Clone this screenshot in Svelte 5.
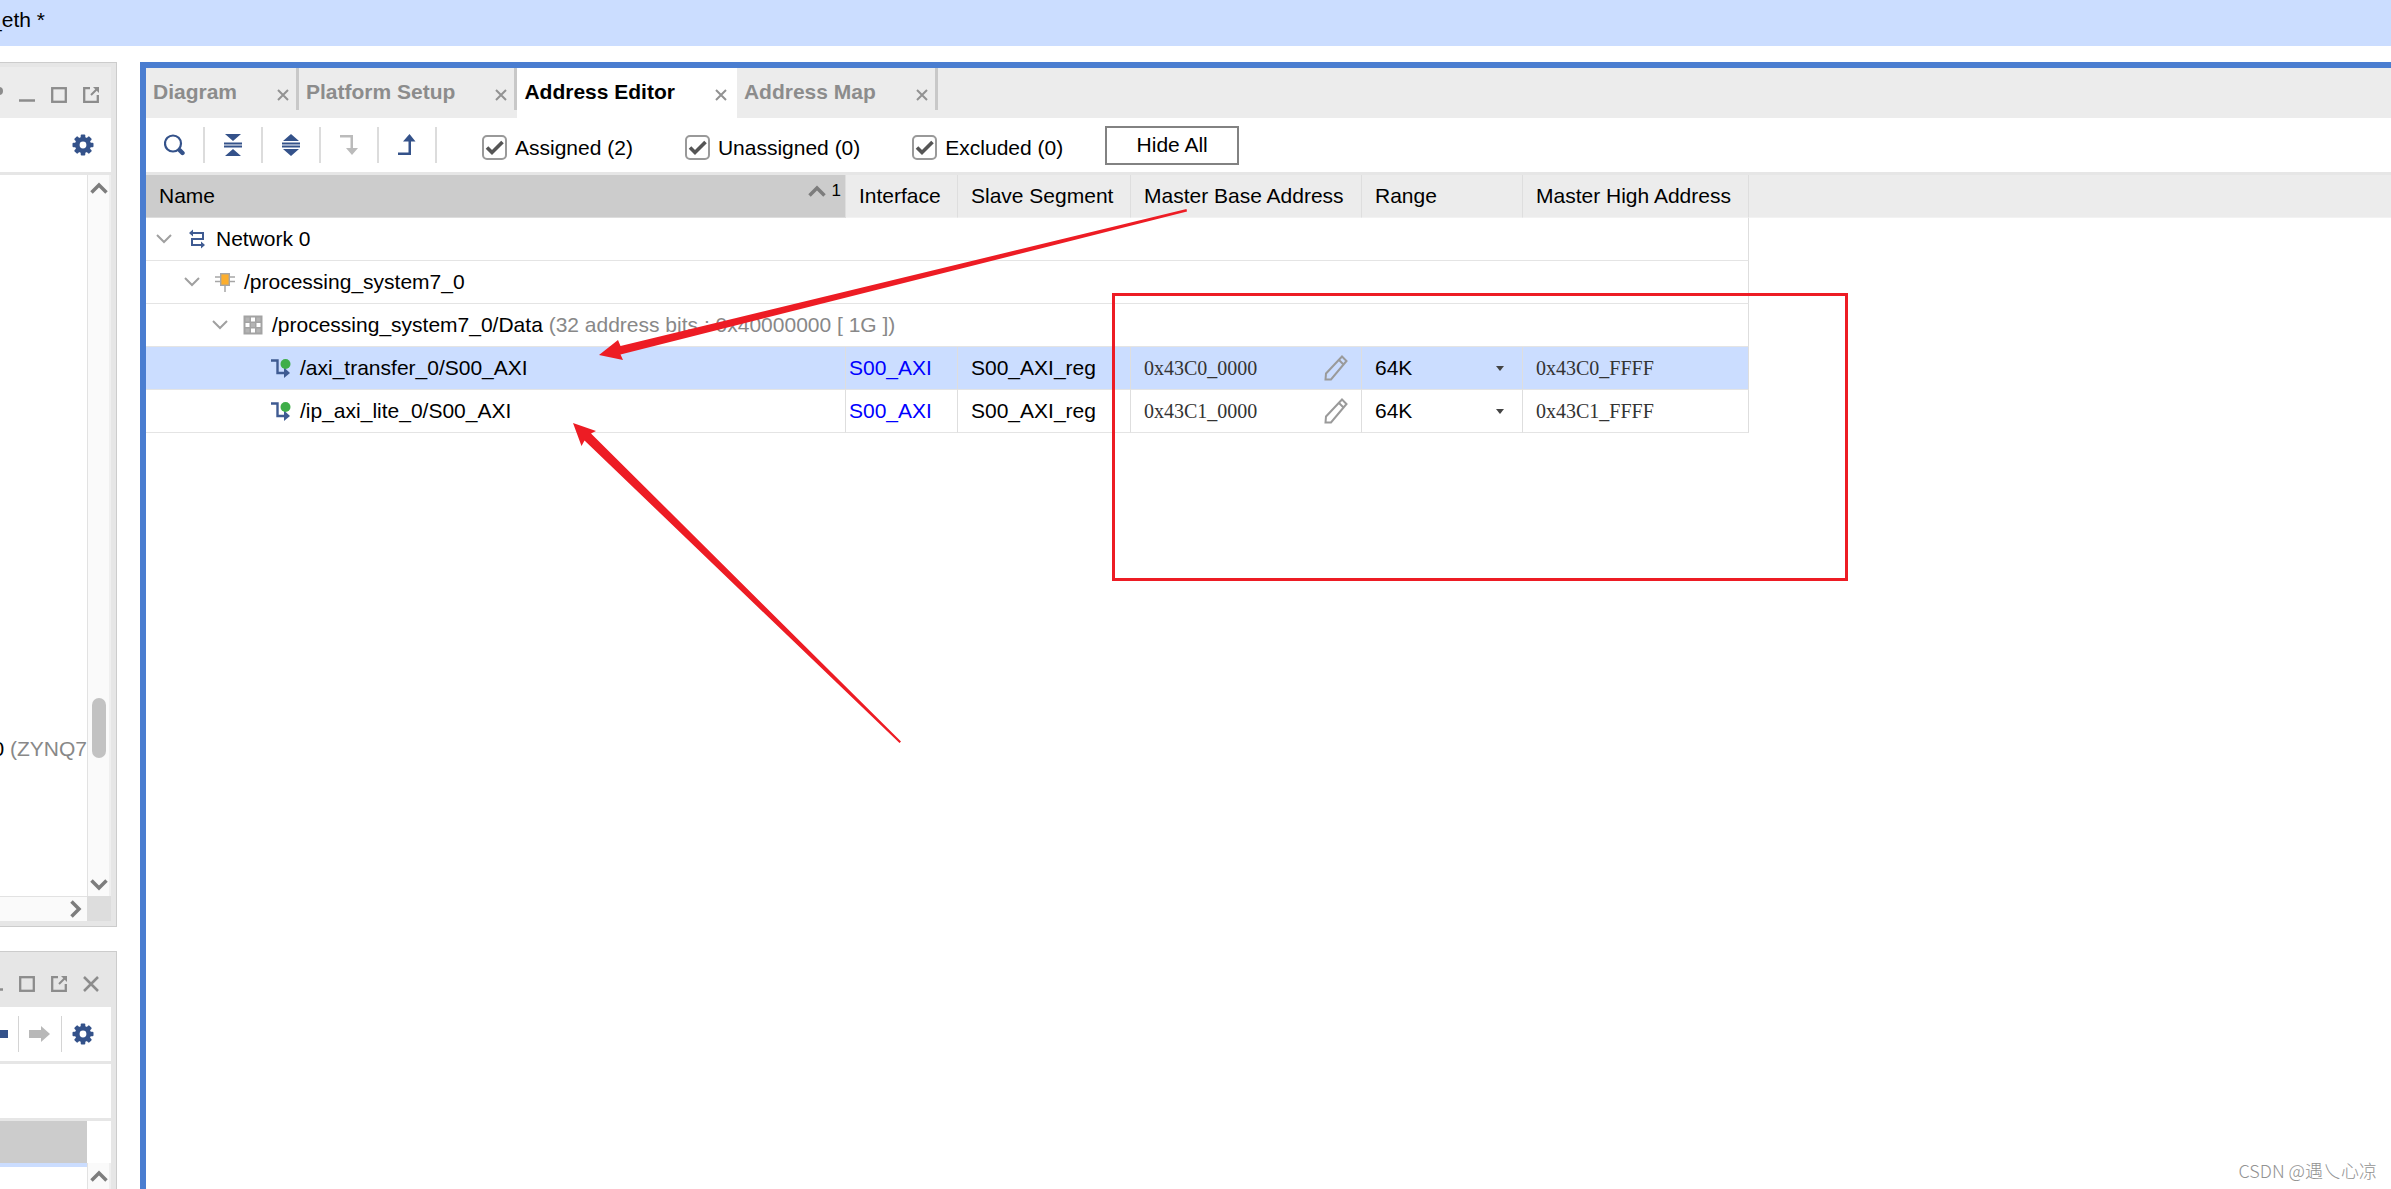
<script>
  let filters = $state([
    { id: "assigned", label: "Assigned (2)", checked: true },
    { id: "unassigned", label: "Unassigned (0)", checked: true },
    { id: "excluded", label: "Excluded (0)", checked: true },
  ]);

  const tabs = ["Diagram", "Platform Setup", "Address Editor", "Address Map"];
  let activeTab = $state("Address Editor");

  const tools = ["search", "collapse", "expand", "down", "up"];
  const groups = [
    { level: 0, icon: "network", name: "Network 0", note: "" },
    { level: 1, icon: "chip", name: "/processing_system7_0", note: "" },
    {
      level: 2,
      icon: "grid",
      name: "/processing_system7_0/Data",
      note: "(32 address bits : 0x40000000 [ 1G ])",
    },
  ];
  let segments = $state([
    {
      name: "/axi_transfer_0/S00_AXI",
      base: "0x43C0_0000",
      high: "0x43C0_FFFF",
      range: "64K",
    },
    {
      name: "/ip_axi_lite_0/S00_AXI",
      base: "0x43C1_0000",
      high: "0x43C1_FFFF",
      range: "64K",
    },
  ]);
  let selected = $state(0);
</script>

{#snippet icon(name)}
  {#if name == "search"}
    <svg width="22" height="22" viewBox="0 0 22 22">
      <circle cx="9" cy="9.5" r="8" fill="none" stroke="#34528a" stroke-width="2.2" />
      <path d="M15.500 16l3 3" stroke="#34528a" stroke-width="4.400" stroke-linecap="round" />
    </svg>
  {:else if name == "collapse"}
    <svg width="22" height="22" viewBox="0 0 22 22" fill="#34528a">
      <path d="M3 0h16l-8 7zM3 22h16l-8-7zM2 8.6h18v2H2zM2 11.6h18v2H2z" />
    </svg>
  {:else if name == "expand"}
    <svg width="22" height="22" viewBox="0 0 22 22" fill="#34528a">
      <path d="M11 0l8 7H3zM11 22l8-7H3zM2 8.6h18v2H2zM2 11.6h18v2H2z" />
    </svg>
  {:else if name == "down"}
    <svg width="22" height="22" viewBox="0 0 22 22" fill="#bbb">
      <path d="M2 1h13v13h5l-6 7-6-7h4.500V3.500H2z" />
    </svg>
  {:else if name == "up"}
    <svg width="22" height="22" viewBox="0 0 22 22" fill="#34528a">
      <path d="M2 21h13V7.500h4.500L13.500 0 7 7.500h5.500v11H2z" />
    </svg>
  {:else if name == "gear"}
    <svg width="22" height="22" viewBox="-11 -11 22 22">
      <g fill="#34528a">
        {#each [0, 45, 90, 135] as angle}
          <rect x="-2.300" y="-10.500" width="4.600" height="21" rx="1" transform="rotate({angle})" />
        {/each}
      </g>
      <circle r="5.700" fill="#fff" stroke="#34528a" stroke-width="4.600" />
    </svg>
  {:else if name == "minimize"}
    <svg width="16" height="16" viewBox="0 0 16 16"><path d="M0 13.500h16" stroke="#8c8c8c" stroke-width="2.500" /></svg>
  {:else if name == "maximize"}
    <svg width="16" height="16" viewBox="0 0 16 16">
      <rect x="1.200" y="1.200" width="13.600" height="13.600" fill="none" stroke="#8c8c8c" stroke-width="2.300" />
    </svg>
  {:else if name == "float"}
    <svg width="16" height="16" viewBox="0 0 16 16" fill="none" stroke="#8c8c8c">
      <path d="M7 1.200H1.200v13.600h13.600V8" stroke-width="2.300" />
      <path d="M8 8l6-6" stroke-width="2" />
      <path d="M10 0h6v6z" fill="#8c8c8c" stroke="none" />
    </svg>
  {:else if name == "close"}
    <svg width="16" height="16" viewBox="0 0 16 16"><path d="M1 1l14 14M15 1L1 15" stroke="#8c8c8c" stroke-width="2.500" /></svg>
  {:else if name == "help"}
    <svg width="16" height="16" viewBox="0 0 16 16"><circle cx="12" cy="4" r="4" fill="#8c8c8c" /></svg>
  {:else if name == "back"}
    <svg width="22" height="16" viewBox="0 0 22 16"><path d="M22 4H9V0L0 8l9 8v-4h13z" fill="#34528a" /></svg>
  {:else if name == "forward"}
    <svg width="22" height="16" viewBox="0 0 22 16"><path d="M0 4h12V0l9 8-9 8v-4H0z" fill="#b8b8b8" /></svg>
  {:else if name == "network"}
    <svg width="20" height="20" viewBox="0 0 20 20">
      <path d="M5 4h11v6H5v6h10" fill="none" stroke="#3f5b92" stroke-width="2" />
      <path d="M2 4l4-3.500v7zM18 16l-4-3.500v7z" fill="#3f5b92" />
    </svg>
  {:else if name == "chip"}
    <svg width="20" height="20" viewBox="0 0 20 20">
      <path d="M0 5h20M0 9.500h20M10 12v8" stroke="#a6a6a6" stroke-width="1.500" />
      <rect x="5.700" y="1.700" width="8.600" height="11.600" fill="#fcae2d" stroke="#a6a6a6" stroke-width="1.400" />
    </svg>
  {:else if name == "grid"}
    <svg width="20" height="20" viewBox="0 0 20 20">
      <rect x=".5" y=".5" width="19" height="19" fill="#a3a3a3" />
      <path d="M2.500 2.500h4v4h-4zM13.500 2.500h4v4h-4zM8 8h4v4H8zM2.500 13.500h4v4h-4zM13.500 13.500h4v4h-4z" fill="#b4b4b4" />
      <path d="M8 2.500h4v4H8zM2.500 8h4v4h-4zM13.500 8h4v4h-4zM8 13.500h4v4H8z" fill="#fff" />
    </svg>
  {:else if name == "segment"}
    <svg width="20" height="20" viewBox="0 0 20 20">
      <path d="M0 2.500h6.500v12.500H14" fill="none" stroke="#3f5b92" stroke-width="2.400" />
      <path d="M13 9.500l6 5.500-6 5z" fill="#3f5b92" />
      <circle cx="14.500" cy="6" r="5" fill="#3fae49" />
    </svg>
  {:else if name == "pencil"}
    <svg width="24" height="26" viewBox="0 0 24 26" fill="none" stroke="#9a9a9a" stroke-width="2">
      <path d="M1.500 24.500l.5-6L18 1.500l4.500 4.500L7 24.500zM15 5l4.500 4.500" />
    </svg>
  {:else if name == "chevron-up"}
    <svg width="18" height="12" viewBox="0 0 18 12"><path d="M1.500 10.500L9 3l7.500 7.500" fill="none" stroke="#7d7d7d" stroke-width="3.500" /></svg>
  {:else if name == "chevron-down"}
    <svg width="18" height="12" viewBox="0 0 18 12"><path d="M1.500 1.500L9 9l7.500-7.500" fill="none" stroke="#7d7d7d" stroke-width="3.500" /></svg>
  {:else if name == "chevron-right"}
    <svg width="12" height="18" viewBox="0 0 12 18"><path d="M1.500 1.500L9 9l-7.500 7.500" fill="none" stroke="#7d7d7d" stroke-width="3.500" /></svg>
  {:else if name == "twisty"}
    <svg width="16" height="10" viewBox="0 0 16 10"><path d="M1 1l7 7 7-7" fill="none" stroke="#a0a0a0" stroke-width="2" /></svg>
  {/if}
{/snippet}

{#snippet iconButton(name)}
  <button class="icon-button" aria-label={name}>{@render icon(name)}</button>
{/snippet}

<div class="app">
  <header class="title-bar"><span class="title">_eth *</span></header>

  <div class="workspace">
    <aside>
      <section class="panel sources">
        <div class="panel-header light">
          {#each ["help", "minimize", "maximize", "float"] as name}
            {@render iconButton(name)}
          {/each}
        </div>
        <div class="panel-tools">
          <span class="tool">{@render iconButton("gear")}</span>
        </div>
        <div class="scroll-area">
          <div class="source-tree"><span>0 <i>(ZYNQ7</i></span></div>
          <div class="v-scroll">
            {@render iconButton("chevron-up")}
            <div class="track"><div class="thumb"></div></div>
            {@render iconButton("chevron-down")}
          </div>
          <div class="h-scroll">{@render iconButton("chevron-right")}</div>
          <div class="corner"></div>
        </div>
      </section>

      <section class="panel">
        <div class="panel-header">
          {#each ["minimize", "maximize", "float", "close"] as name}
            {@render iconButton(name)}
          {/each}
        </div>
        <div class="panel-tools">
          {#each ["back", "forward", "gear"] as name}
            <span class="tool ruled">{@render iconButton(name)}</span>
          {/each}
        </div>
        <div class="panel-blank"></div>
        <div class="property-head"></div>
        <div class="property-body">
          <div class="property-row"></div>
          <div class="v-scroll">{@render iconButton("chevron-up")}</div>
        </div>
      </section>
    </aside>

    <main>
      <nav class="tabs">
        {#each tabs as tab}
          <div class="tab" class:active={tab == activeTab}>
            <button class="tab-name" onclick={() => (activeTab = tab)}>{tab}</button>
            <button class="icon-button" aria-label="Close {tab}">
              <svg width="12" height="12" viewBox="0 0 12 12">
                <path d="M1 1l10 10M11 1L1 11" stroke="#929292" stroke-width="2" />
              </svg>
            </button>
          </div>
        {/each}
      </nav>

      <div class="toolbar">
        {#each tools as name}
          <span class="main-tool">{@render iconButton(name)}</span>
        {/each}
        <div class="filters">
          {#each filters as filter}
            <label for={filter.id}>
              <span class="check">
                <input id={filter.id} type="checkbox" bind:checked={filter.checked} />
                {#if filter.checked}
                  <svg width="25" height="25" viewBox="0 0 25 25">
                    <path d="M5 12.500l5 5L20.500 7" fill="none" stroke="#555" stroke-width="3.600" />
                  </svg>
                {/if}
              </span>
              {filter.label}
            </label>
          {/each}
        </div>
        <button class="hide-all">Hide All</button>
      </div>

      <table>
        <colgroup>
          <col class="c-name" />
          <col class="c-interface" />
          <col class="c-slave" />
          <col class="c-base" />
          <col class="c-range" />
          <col class="c-high" />
          <col />
        </colgroup>
        <thead>
          <tr>
            <th class="sorted">
              <div class="sort-head">
                Name
                <span class="sort">{@render icon("chevron-up")}<small>1</small></span>
              </div>
            </th>
            <th>Interface</th>
            <th>Slave Segment</th>
            <th>Master Base Address</th>
            <th>Range</th>
            <th>Master High Address</th>
            <td class="filler"></td>
          </tr>
        </thead>
        <tbody>
          {#each groups as group}
            <tr>
              <td class="tree-cell" colspan="6">
                <div class="node level-{group.level}">
                  <button class="icon-button twisty" aria-label="Toggle {group.name}">{@render icon("twisty")}</button>
                  {@render icon(group.icon)}
                  <span>{group.name} <i>{group.note}</i></span>
                </div>
              </td>
              <td class="filler"></td>
            </tr>
          {/each}
          {#each segments as segment, i}
            <tr class:selected={selected == i} onclick={() => (selected = i)}>
              <td class="tree-cell">
                <div class="node leaf">{@render icon("segment")}<span>{segment.name}</span></div>
              </td>
              <td class="link-cell"><a href="#interface">S00_AXI</a></td>
              <td>S00_AXI_reg</td>
              <td>
                <div class="spread address">
                  {segment.base}
                  <button class="icon-button" aria-label="Edit {segment.name}">{@render icon("pencil")}</button>
                </div>
              </td>
              <td>
                <div class="spread range">
                  <select aria-label="Range of {segment.name}" bind:value={segment.range}>
                    <option>32K</option>
                    <option>64K</option>
                    <option>128K</option>
                  </select>
                  <svg width="8" height="5" viewBox="0 0 8 5"><path d="M0 0h8L4 5z" fill="#444" /></svg>
                </div>
              </td>
              <td class="address">{segment.high}</td>
              <td class="filler"></td>
            </tr>
          {/each}
        </tbody>
      </table>
    </main>
  </div>

  <!-- markup drawn over the editor -->
  <svg class="notes" aria-hidden="true">
    <rect x="1113.500" y="294.500" width="733" height="285" fill="none" stroke="#ed1c24" stroke-width="3" />
    <path d="M599 355L618 340 620.500 346 1186.500 209 1187 211.500 620.500 354.500 623 360z" fill="#ed1c24" />
    <path d="M573 423L596 431 591 433.500 901 741.500 899.500 743 584.500 440.500 581.500 446z" fill="#ed1c24" />
  </svg>
  <div class="watermark">CSDN @遇乀心凉</div>
</div>

<style>
  :global(body) {
    background: #fff;
    color: #000;
    font-family: "Liberation Sans", Arial, sans-serif;
    font-size: 21px;
    line-height: 24px;
  }
  .app {
    position: relative;
    display: flex;
    flex-direction: column;
    height: 100vh;
    overflow: hidden;
  }
  button,
  select {
    font: inherit;
    color: inherit;
    margin: 0;
    padding: 0;
    border: 0;
    background: none;
  }
  svg {
    display: block;
    flex: none;
  }
  i {
    color: #888;
    font-style: normal;
  }
  .icon-button {
    display: block;
    flex: none;
  }

  .title-bar {
    display: flex;
    align-items: center;
    height: 46px;
    padding-bottom: 6px;
    box-sizing: border-box;
    background: #cbddff;
  }
  .title {
    display: flex;
    justify-content: flex-end;
    width: 45px;
    overflow: hidden;
    white-space: pre;
  }
  .workspace {
    display: flex;
    gap: 23px;
    flex: 1;
    min-height: 0;
    padding-top: 16px;
  }

  aside {
    display: flex;
    flex-direction: column;
    gap: 24px;
    width: 117px;
  }
  .panel {
    padding-right: 5px;
    border-top: 1px solid #ccc;
    border-right: 1px solid #ccc;
    background: #e6e6e6;
    overflow: hidden;
  }
  .sources {
    display: flex;
    flex-direction: column;
    flex: 1;
    min-height: 0;
    padding-bottom: 5px;
    border-bottom: 1px solid #ccc;
  }
  .panel-header {
    display: flex;
    align-items: center;
    justify-content: flex-end;
    gap: 16px;
    height: 51px;
    margin-top: 4px;
    padding: 5px 12px 0 0;
    box-sizing: border-box;
  }
  .light {
    background: #ececec;
  }
  .panel-tools {
    display: flex;
    justify-content: flex-end;
    height: 54px;
    padding-right: 7px;
    border-bottom: 3px solid #e6e6e6;
    background: #fff;
  }
  .tool {
    display: flex;
    align-items: center;
    justify-content: center;
    flex: none;
    width: 42px;
  }
  .ruled::before {
    content: "";
    flex: none;
    width: 1px;
    height: 36px;
    margin-right: auto;
    background: #d4d4d4;
  }
  .ruled .icon-button {
    margin-right: auto;
  }
  .ruled {
    width: 43px;
  }
  .scroll-area {
    display: grid;
    grid-template-columns: minmax(0, 1fr) 24px;
    grid-template-rows: minmax(0, 1fr) 25px;
    flex: 1;
    min-height: 0;
    background: #fff;
  }
  .source-tree {
    display: flex;
    align-items: flex-end;
    justify-content: flex-end;
    padding-bottom: 135px;
    overflow: hidden;
    white-space: nowrap;
  }
  .v-scroll {
    display: flex;
    flex-direction: column;
    align-items: center;
    width: 24px;
    padding: 7px 0 5px;
    box-sizing: border-box;
    border-left: 1px solid #e2e2e2;
    border-right: 2px solid #efefef;
    background: #fafafa;
  }
  .track {
    display: flex;
    align-items: flex-end;
    flex: 1;
    padding-bottom: 121px;
  }
  .thumb {
    width: 14px;
    height: 60px;
    border-radius: 7px;
    background: #c2c2c2;
  }
  .h-scroll {
    display: flex;
    align-items: center;
    justify-content: flex-end;
    padding-right: 5px;
    border-top: 1px solid #e2e2e2;
    background: #fafafa;
  }
  .corner {
    background: #ddd;
  }
  .panel-blank {
    height: 54px;
    border-bottom: 3px solid #e6e6e6;
    background: #fff;
  }
  .property-head {
    height: 42px;
    border-right: 24px solid #fff;
    background: #ccc;
  }
  .property-body {
    display: flex;
    height: 26px;
    background: #fff;
  }
  .property-row {
    flex: 1;
    border-top: 4px solid #cbddff;
  }

  main {
    flex: 1;
    min-width: 0;
    border-top: 6px solid #4a7dd0;
    border-left: 6px solid #4a7dd0;
  }
  .tabs {
    display: flex;
    height: 50px;
    background: #ececec;
  }
  .tab {
    display: flex;
    align-items: center;
    gap: 40px;
    padding: 0 7px;
    color: #8c8c8c;
    font-weight: bold;
  }
  .tab::after {
    content: "";
    align-self: flex-start;
    width: 3px;
    height: 42px;
    margin: 0 -7px 0 -33px;
    background: #c8c8c8;
  }
  .tab .icon-button {
    padding-top: 3px;
  }
  .tab-name {
    padding-bottom: 3px;
  }
  .active {
    background: #fff;
    color: #000;
  }
  .active::after {
    background: #fff;
  }

  .toolbar {
    display: flex;
    align-items: center;
    height: 54px;
    padding-left: 1px;
    border-bottom: 3px solid #e6e6e6;
  }
  .main-tool {
    display: flex;
    align-items: center;
    justify-content: center;
    width: 56px;
    height: 36px;
    border-right: 2px solid #dcdcdc;
  }
  .filters {
    display: flex;
    gap: 52px;
    margin: 0 42px 0 45px;
    padding-top: 5px;
  }
  label {
    display: flex;
    align-items: center;
    gap: 8px;
  }
  .check {
    display: grid;
  }
  .check > * {
    grid-area: 1 / 1;
    pointer-events: none;
  }
  .check input {
    appearance: none;
    width: 25px;
    height: 25px;
    margin: 0;
    border: 2px solid #999;
    border-radius: 5px;
    background: #fff;
    pointer-events: auto;
  }
  .hide-all {
    width: 134px;
    height: 39px;
    border: 2px solid #828282;
    background: #fff;
  }

  table {
    width: 100%;
    table-layout: fixed;
    border-collapse: separate;
    border-spacing: 0;
  }
  .c-name {
    width: 700px;
  }
  .c-interface {
    width: 112px;
  }
  .c-slave {
    width: 173px;
  }
  .c-base {
    width: 231px;
  }
  .c-range {
    width: 161px;
  }
  .c-high {
    width: 226px;
  }
  th,
  td {
    height: 43px;
    padding: 0 0 0 13px;
    box-sizing: border-box;
    border-right: 1px solid #dedede;
    border-bottom: 1px solid #e4e4e4;
    font-weight: normal;
    text-align: left;
    white-space: nowrap;
  }
  thead th,
  thead .filler {
    background: #ececec;
    border-bottom-color: #f2f2f2;
  }
  thead .sorted {
    background: #ccc;
    border-bottom-color: #ddd;
  }
  tbody .filler {
    border-bottom: 0;
  }
  .filler {
    border-right: 0;
  }
  .sort-head {
    display: flex;
    align-items: center;
    justify-content: space-between;
    padding-right: 4px;
  }
  .sort {
    display: flex;
    align-items: center;
    gap: 6px;
    padding-bottom: 10px;
  }
  small {
    font-size: 17px;
    line-height: 20px;
  }
  .tree-cell {
    padding-left: 10px;
  }
  .node {
    display: flex;
    align-items: center;
    gap: 9px;
  }
  .twisty {
    padding-right: 6px;
  }
  .level-1 {
    padding-left: 28px;
  }
  .level-2 {
    padding-left: 56px;
  }
  .leaf {
    padding-left: 115px;
  }
  .selected td:not(.filler) {
    background: #cbddff;
  }
  .link-cell {
    padding-left: 3px;
  }
  a {
    color: #00f;
    text-decoration: none;
  }
  .spread {
    display: flex;
    align-items: center;
    justify-content: space-between;
    padding-right: 13px;
  }
  .address {
    color: #333;
    font-family: "Liberation Serif", "Times New Roman", serif;
    font-size: 20px;
  }
  .range {
    padding-right: 18px;
  }
  select {
    appearance: none;
    flex: 1;
    min-width: 0;
  }

  .notes {
    position: absolute;
    inset: 0;
    width: 100%;
    height: 100%;
    pointer-events: none;
  }
  .watermark {
    position: absolute;
    right: 14px;
    bottom: 7px;
    color: #929292;
    font-family: "Noto Sans CJK SC", sans-serif;
    font-size: 18px;
    font-weight: 300;
  }
</style>
